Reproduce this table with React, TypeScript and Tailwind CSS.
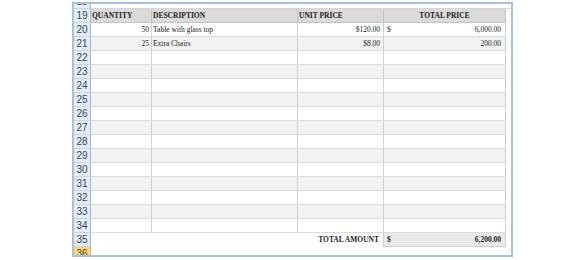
import React from "react";

const serif = { fontFamily: '"Liberation Serif", "Times New Roman", serif' };

type Row = {
  n: number;
  qty?: string;
  desc?: string;
  unit?: string;
  dollar?: boolean;
  total?: string;
};

const rows: Row[] = [
  { n: 20, qty: "50", desc: "Table with glass top", unit: "$120.00", dollar: true, total: "6,000.00" },
  { n: 21, qty: "25", desc: "Extra Chairs", unit: "$8.00", total: "200.00" },
];
for (let i = 22; i <= 34; i++) rows.push({ n: i });

function RowHead({ n, selected }: { n: number; selected?: boolean }) {
  return (
    <div
      className={
        "w-[17px] shrink-0 h-full flex items-center justify-center border-r border-b text-[10px] leading-none " +
        (selected
          ? "bg-[#f9d67c] border-[#e3b44a] text-[#5a4a20]"
          : "bg-[#e4ecf7] border-r-[#9eb6ce] border-b-[#c9d6e6] text-[#3c4654]")
      }
      style={{ fontFamily: '"Liberation Sans", Arial, sans-serif' }}
    >
      {n}
    </div>
  );
}

export default function App() {
  return (
    <div className="w-[585px] h-[260px] bg-white pt-[2px] pl-[72px]">
      <div className="w-[441px] h-[255px] border-2 border-[#a7c1e3] overflow-hidden bg-white">
        <div className="flex flex-col mt-[-9px]">
          {/* row 18 */}
          <div className="flex h-[14px]">
            <RowHead n={18} />
            <div className="flex-1 border-b border-[#d6d6d6]" />
          </div>
          {/* header row 19 */}
          <div className="flex h-[14px]" style={serif}>
            <RowHead n={19} />
            <div className="flex w-[415px] h-full bg-[#dadada] border-b border-[#c4c4c4] text-[7.5px] font-bold text-[#1e1e1e] leading-none">
              <div className="w-[61px] h-full border-r border-[#c4c4c4] flex items-center pl-[1px]">QUANTITY</div>
              <div className="w-[146px] h-full border-r border-[#c4c4c4] flex items-center pl-[1px]">DESCRIPTION</div>
              <div className="w-[86px] h-full border-r border-[#c4c4c4] flex items-center pl-[1px]">UNIT PRICE</div>
              <div className="w-[122px] h-full border-r border-[#c4c4c4] flex items-center justify-center">TOTAL PRICE</div>
            </div>
          </div>
          {rows.map((r) => (
            <div key={r.n} className="flex h-[14px]" style={serif}>
              <RowHead n={r.n} />
              <div
                className={
                  "flex w-[415px] h-full border-b border-[#dcdcdc] text-[7.5px] text-[#222] leading-none " +
                  (r.n % 2 === 1 ? "bg-[#f2f2f2]" : "bg-white")
                }
              >
                <div className="w-[61px] h-full border-r border-[#cfcfcf] flex items-center justify-end pr-[2px]">{r.qty}</div>
                <div className="w-[146px] h-full border-r border-[#cfcfcf] flex items-center pl-[1px]">{r.desc}</div>
                <div className="w-[86px] h-full border-r border-[#cfcfcf] flex items-center justify-end pr-[3px]">{r.unit}</div>
                <div className="w-[122px] h-full border-r border-[#cfcfcf] flex items-center justify-between pl-[3px] pr-[4px]">
                  <span>{r.dollar ? "$" : ""}</span>
                  <span>{r.total}</span>
                </div>
              </div>
            </div>
          ))}
          {/* total row 35 */}
          <div className="flex h-[14px]" style={serif}>
            <RowHead n={35} />
            <div className="flex w-[415px] h-full bg-white text-[7.5px] font-bold text-[#1e1e1e] leading-none">
              <div className="w-[293px] h-full border-r border-[#cfcfcf] flex items-center justify-end pr-[4px]">TOTAL AMOUNT</div>
              <div className="w-[122px] h-full bg-[#e9e9e9] border-r border-b border-[#cfcfcf] flex items-center justify-between pl-[3px] pr-[4px]">
                <span>$</span>
                <span>6,200.00</span>
              </div>
            </div>
          </div>
          {/* row 36 */}
          <div className="flex h-[14px]">
            <RowHead n={36} selected />
            <div className="flex-1" />
          </div>
        </div>
      </div>
    </div>
  );
}
